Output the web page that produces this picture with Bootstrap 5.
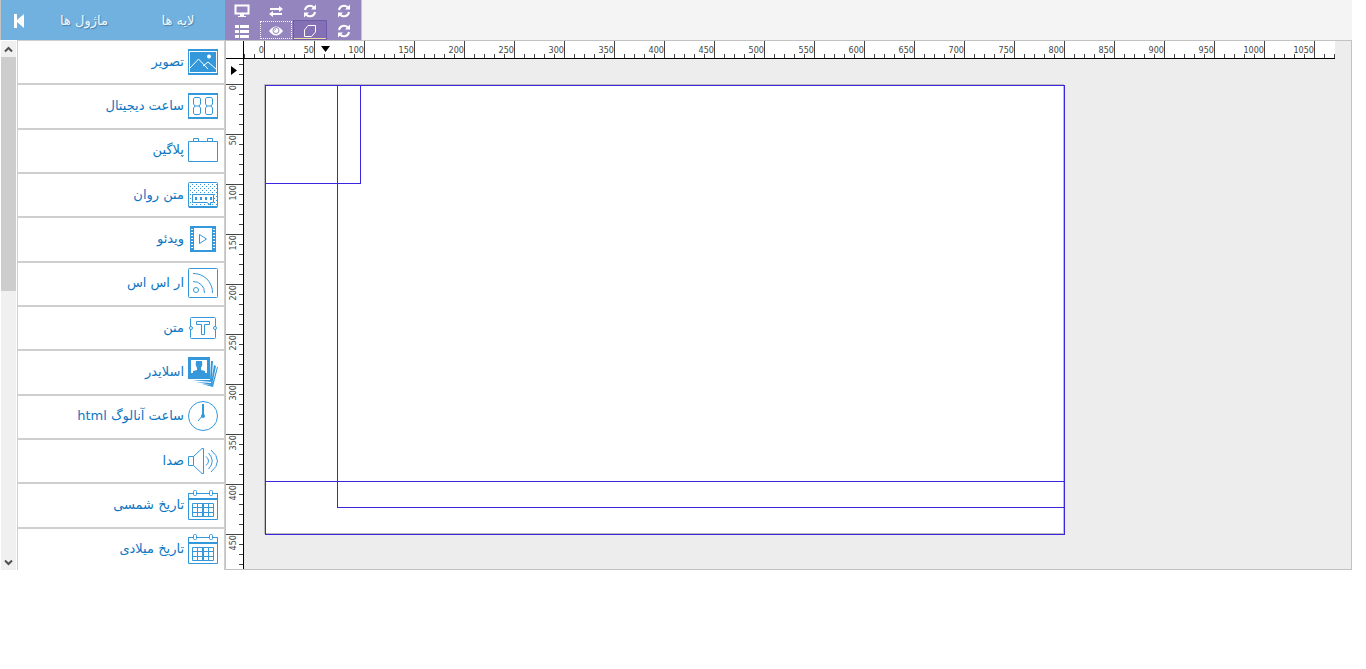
<!DOCTYPE html>
<html lang="fa">
<head>
<meta charset="utf-8">
<meta name="viewport" content="width=device-width, initial-scale=1">
<title>Layout editor</title>
<link href="https://cdn.jsdelivr.net/npm/bootstrap@5.3.0/dist/css/bootstrap.min.css" rel="stylesheet">
<style>
  body { font: 13px/20px "DejaVu Sans", sans-serif; background: #fff; }
  button { border: 0; padding: 0; background: none; }
  .editor { margin-right: 14px; }

  /* header */
  .topbar { height: 40px; background: #f4f4f4; border-left: 1px solid #c4c4c4; }
  .tabs-head { width: 224px; background: #70b1e0; padding: 2px 0 0 12px; }
  .tabs-head button { color: #f2f8fd; text-shadow: 1px 1px 1px #4a7fa8; }
  .tabs-head .tab-button { width: 94px; }
  .tools { width: 137px; background: #9585bf; border-right: 1px solid #c4c4c4;
           display: grid; grid-template-columns: repeat(4, 34px); grid-template-rows: 20px 20px; }
  .tools button { display: grid; place-items: center; color: #fff; padding-top: 2px; }
  .tools .tool-focus { border: 1px dotted #fff; margin: 1px; }
  .tools .tool-on { background: #8470b4; border: 1px solid #6f5ba8; box-shadow: inset 0 -1px #f3dca0; }

  /* sidebar */
  .work-row { height: 530px; }
  .side-panel { width: 225px; padding-left: 1px; }
  .scroller { width: 15px; background: #f0f0f0; margin: 1px 1px 0 0; }
  .scroller button { height: 16px; display: grid; place-items: center; }
  .scroller-thumb { height: 234px; background: #cdcdcd; }
  .module-list { height: 532px; }
  .module-item { flex: 1 1 0; min-height: 0; border: 1px solid #cfcfcf; padding: 0 6px 1px 0; gap: 4px;
                 color: #0d76c2; text-decoration: none; background: #fff; }
  .module-item svg { width: 30px; height: 30px; fill: none; stroke: #3498db; }
  .solid { fill: #3498db; }

  /* rulers */
  .workspace { background: #ededed; border: 1px solid #c2c2c2; min-width: 0; }
  .ruler-corner { width: 18px; height: 18px; background: #fff; border-right: 1px solid #000; border-bottom: 1px solid #000; }
  .ruler-x, .ruler-y { color: #444; font-family: "DejaVu Sans Condensed", "DejaVu Sans", sans-serif;
                       font-size: 9px; line-height: 19px; background-color: #fff; }
  .ruler-x { height: 18px; margin-right: 16px; min-width: 0; border-bottom: 1px solid #000;
             background-image: linear-gradient(90deg, #444 1px, transparent 1px);
             background-size: 10px 4px; background-repeat: repeat-x; background-position: left bottom; }
  .ruler-x span { flex: 0 0 50px; border-right: 1px solid #444; text-align: right; }
  .ruler-x .lead-in { flex-basis: 21px; }
  .ruler-y { width: 18px; border-right: 1px solid #000;
             background-image: linear-gradient(#444 1px, transparent 1px);
             background-size: 4px 10px; background-repeat: repeat-y; background-position: right 5px; }
  .ruler-y div { flex: 0 0 50px; border-top: 1px solid #444; padding-left: 1px; }
  .ruler-y .lead-in { flex-basis: 25px; border: 0; }
  .ruler-y span { writing-mode: vertical-rl; transform: rotate(180deg); display: block; line-height: 13px; width: 13px; }
  .mark-x { left: 95px; top: 5px; line-height: 0; }
  .mark-y { left: 5px; top: 25px; line-height: 0; }

  /* page being designed and the regions placed on it */
  .stage { width: 800px; height: 450px; flex: none; margin: 25px 0 0 20px; background: #fff; border: 1px solid #bdbdbd; }
  .region { position: absolute; top: 0; left: 0; border: 1px solid #3826e0; }
  .region-page { width: 800px; height: 450px; }
  .region-main { width: 800px; height: 397px; }
  .region-corner { width: 96px; height: 99px; }
  .region-inset { left: 72px; width: 728px; height: 423px; }
</style>
<script src="https://cdn.jsdelivr.net/npm/bootstrap@5.3.0/dist/js/bootstrap.bundle.min.js"></script>
</head>
<body>
<svg width="0" height="0" class="position-absolute" aria-hidden="true">
  <symbol id="refresh" viewBox="0 0 14 14">
    <path d="M2 6 A5 5 0 0 1 10.600 3.300 M12 8 A5 5 0 0 1 3.400 10.700" fill="none" stroke="#fff" stroke-width="2"/>
    <path d="M13 .5V5.500H8ZM1 13.500V8.500H6Z" fill="#fff"/>
  </symbol>
  <symbol id="calendar" viewBox="0 0 30 30">
    <path d="M.5 3.500H5M9 3.500H21M25 3.500H29.500M.5 3V29.500H29.500V3"/>
    <path d="M1 9H29" stroke-width="2"/>
    <rect x="5.500" y=".5" width="3" height="5" rx="1"/><rect x="21.500" y=".5" width="3" height="5" rx="1"/>
    <path d="M4.500 13.500H25.500V26.500H4.500ZM4.500 17.500H25.500M4.500 22.500H25.500M9.500 13.500V26.500M14.500 13.500V26.500M15.500 13.500V26.500M20.500 13.500V26.500"/>
  </symbol>
</svg>

<div class="editor">
  <header class="topbar d-flex">
    <nav class="tabs-head d-flex align-items-center">
      <button type="button" class="d-flex flex-grow-1" aria-label="Collapse"><svg width="12" height="14"><path d="M1 0H4V6L11 0V14L4 8V14H1Z" fill="#fff"/></svg></button>
      <button type="button" class="tab-button" dir="rtl">ماژول ها</button>
      <button type="button" class="tab-button" dir="rtl">لایه ها</button>
    </nav>
    <div class="tools" role="toolbar">
      <button type="button" aria-label="Screen"><svg width="16" height="14"><path d="M1.500 1.500H14.500V9.500H1.500Z" fill="none" stroke="#fff" stroke-width="2"/><path d="M6 10H10V12H12V13H4V12H6Z" fill="#fff"/></svg></button>
      <button type="button" aria-label="Swap"><svg width="14" height="12"><path d="M1 4H10M4 9H13" stroke="#fff" stroke-width="2"/><path d="M10 1V7L14 4ZM4 6V12L0 9Z" fill="#fff"/></svg></button>
      <button type="button" aria-label="Refresh"><svg width="14" height="14"><use href="#refresh"/></svg></button>
      <button type="button" aria-label="Refresh"><svg width="14" height="14"><use href="#refresh"/></svg></button>
      <button type="button" aria-label="List"><svg width="14" height="13"><path d="M0 0H4V3H0ZM5 0H14V3H5ZM0 5H4V8H0ZM5 5H14V8H5ZM0 10H4V13H0ZM5 10H14V13H5Z" fill="#fff"/></svg></button>
      <button type="button" class="tool-focus" aria-label="Preview"><svg width="14" height="10"><path d="M0 5Q7-4 14 5Q7 14 0 5Z" fill="#fff"/><circle cx="7" cy="4.500" r="3" fill="#fff" stroke="#9585bf"/><path d="M7 3A2 2 0 0 0 5.500 4.500" fill="none" stroke="#9585bf"/></svg></button>
      <button type="button" class="tool-on" aria-label="Shape"><svg width="14" height="14"><path d="M5 1.500H12.500V8L8.500 12.500H1.500V6Z" fill="none" stroke="#fff" stroke-linejoin="round"/></svg></button>
      <button type="button" aria-label="Refresh"><svg width="14" height="14"><use href="#refresh"/></svg></button>
    </div>
  </header>

  <div class="work-row d-flex">
    <aside class="side-panel d-flex flex-shrink-0 overflow-hidden">
      <div class="scroller d-flex flex-column flex-shrink-0">
        <button type="button" aria-label="Scroll up"><svg width="9" height="7"><path d="M1 5.500L4.500 2L8 5.500" fill="none" stroke="#505050" stroke-width="2"/></svg></button>
        <div class="scroller-thumb"></div>
        <button type="button" class="mt-auto" aria-label="Scroll down"><svg width="9" height="7"><path d="M1 1.500L4.500 5L8 1.500" fill="none" stroke="#505050" stroke-width="2"/></svg></button>
      </div>
      <nav class="module-list d-flex flex-column flex-grow-1" dir="rtl">
        <a href="#" class="module-item d-flex align-items-center"><svg viewBox="0 0 30 30"><path d="M.5 3V28M29.500 3V28"/><path d="M0 3H30M0 27H30" stroke-width="2"/><path class="solid" stroke="none" d="M2 5H28V25H2Z"/><path d="M2 21L10.500 12L20 22M15 19L20 15L28 22" stroke="#fff"/><circle cx="21" cy="9.500" r="2" fill="#fff" stroke="none"/></svg><span>تصویر</span></a>
        <a href="#" class="module-item d-flex align-items-center"><svg viewBox="0 0 30 30"><path d="M.5 3V28M29.500 3V28"/><path d="M0 3H30M0 27H30" stroke-width="2"/><path d="M6.500 6.500H11.500L12.500 8V13L11 15H7L5.500 13V8ZM7 15L5.500 17V22L6.500 23.500H11.500L12.500 22V17L11 15M18.500 6.500H23.500L24.500 8V13L23 15H19L17.500 13V8ZM19 15L17.500 17V22L18.500 23.500H23.500L24.500 22V17L23 15"/></svg><span>ساعت دیجیتال</span></a>
        <a href="#" class="module-item d-flex align-items-center"><svg viewBox="0 0 30 30"><path d="M.5 6.500H29.500V26.500H.5ZM5.500 6V3.500H10.500V6M19.500 6V3.500H24.500V6"/></svg><span>پلاگین</span></a>
        <a href="#" class="module-item d-flex align-items-center"><svg viewBox="0 0 30 30"><defs><pattern id="dots" width="4" height="4" patternUnits="userSpaceOnUse"><path class="solid" stroke="none" d="M0 0H1V1H0ZM2 2H3V3H2Z"/></pattern></defs><path d="M1 3H29V27H1Z" fill="url(#dots)" stroke="none"/><rect x=".5" y="2.500" width="29" height="25" rx="1"/><path d="M1 27H29" stroke-width="2"/><path d="M4.500 14.500H25.500V22.500H22.500V25L19 22.500H4.500Z" fill="#fff"/><path d="M7 18.500H24" stroke-width="3" stroke-dasharray="2 3"/></svg><span>متن روان</span></a>
        <a href="#" class="module-item d-flex align-items-center"><svg viewBox="0 0 30 30"><path d="M2 3H28M2 27H28" stroke-width="2"/><path d="M4 2V28M26 2V28" stroke-width="4"/><path d="M4 5V26M26 5V26" stroke="#fff" stroke-width="2" stroke-dasharray="1 2"/><path d="M11.500 10.500V19.500L18.500 15Z"/></svg><span>ویدئو</span></a>
        <a href="#" class="module-item d-flex align-items-center"><svg viewBox="0 0 30 30"><rect x=".5" y=".5" width="29" height="29" rx="1"/><circle cx="8" cy="22" r="2.500"/><path d="M5 13.500A11 11 0 0 1 16.500 25M5 5.500A19 19 0 0 1 24.500 25"/></svg><span>ار اس اس</span></a>
        <a href="#" class="module-item d-flex align-items-center"><svg viewBox="0 0 30 30"><rect x="2.500" y="4.500" width="25" height="21" rx="1"/><circle cx="3" cy="15" r="1.500" fill="#fff"/><circle cx="27" cy="15" r="1.500" fill="#fff"/><path d="M8.500 8.500H21.500V11.500H16.500V21.500H13.500V11.500H8.500Z"/></svg><span>متن</span></a>
        <a href="#" class="module-item d-flex align-items-center"><svg viewBox="0 0 30 30"><path class="solid" stroke="none" d="M0 0H22V22H0ZM23 4H25L23.500 25L4 23L22 23ZM26 8L28 9L24 28L8 25L23 26ZM29 10H30L25 30L14 27L24 28Z"/><path d="M3 3H19V16H3Z" fill="#fff" stroke="none"/><path class="solid" stroke="none" d="M5 16V14L9 13V11Q7 8 8 4H14Q15 8 13 11V13L17 14V16Z"/></svg><span>اسلایدر</span></a>
        <a href="#" class="module-item d-flex align-items-center"><svg viewBox="0 0 30 30"><circle cx="15" cy="15" r="14.500"/><path d="M15 14L10 20"/><path d="M15 3V15" stroke-width="2"/><circle cx="15" cy="15" r="2" class="solid" stroke="none"/></svg><span>ساعت آنالوگ html</span></a>
        <a href="#" class="module-item d-flex align-items-center"><svg viewBox="0 0 30 30"><path d="M.5 10.500H5.500V19.500H.5ZM5.500 10.500L14 2.500H15.500V27.500H14L5.500 19.500M18 10.500Q23 15 18 19.500M20.500 7Q28 15 20.500 23M23 4Q36 15 23 26"/></svg><span>صدا</span></a>
        <a href="#" class="module-item d-flex align-items-center"><svg><use href="#calendar"/></svg><span>تاریخ شمسی</span></a>
        <a href="#" class="module-item d-flex align-items-center"><svg><use href="#calendar"/></svg><span>تاریخ میلادی</span></a>
      </nav>
    </aside>

    <main class="workspace d-flex flex-column flex-grow-1 position-relative overflow-hidden">
      <div class="d-flex flex-shrink-0">
        <div class="ruler-corner flex-shrink-0"></div>
        <div class="ruler-x d-flex flex-grow-1 overflow-hidden">
          <span class="lead-in">0</span><span>50</span><span>100</span><span>150</span><span>200</span><span>250</span><span>300</span><span>350</span><span>400</span><span>450</span><span>500</span><span>550</span><span>600</span><span>650</span><span>700</span><span>750</span><span>800</span><span>850</span><span>900</span><span>950</span><span>1000</span><span>1050</span>
        </div>
      </div>
      <div class="d-flex flex-grow-1 overflow-hidden">
        <div class="ruler-y d-flex flex-column flex-shrink-0 overflow-hidden">
          <div class="lead-in"></div>
          <div><span>0</span></div><div><span>50</span></div><div><span>100</span></div><div><span>150</span></div><div><span>200</span></div><div><span>250</span></div><div><span>300</span></div><div><span>350</span></div><div><span>400</span></div><div><span>450</span></div>
        </div>
        <section class="stage position-relative">
          <div class="region region-page"></div>
          <div class="region region-main"></div>
          <div class="region region-corner"></div>
          <div class="region region-inset"></div>
        </section>
      </div>
      <div class="mark-x position-absolute"><svg width="9" height="6"><path d="M0 0H9L4.500 6Z"/></svg></div>
      <div class="mark-y position-absolute"><svg width="6" height="9"><path d="M0 0V9L6 4.500Z"/></svg></div>
    </main>
  </div>
</div>
</body>
</html>
